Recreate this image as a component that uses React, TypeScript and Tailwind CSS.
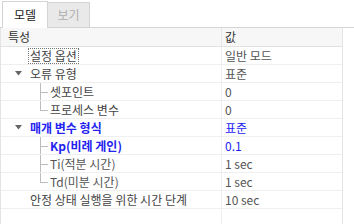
import React from 'react';

type Row = {
  label: string;
  value: string;
  level: 0 | 1;
  caret?: boolean;
  blue?: boolean;
  bold?: boolean;
  focus?: boolean;
  last?: boolean;
  muted?: boolean;
};

const rows: Row[] = [
  { label: '설정 옵션', value: '일반 모드', level: 0, focus: true },
  { label: '오류 유형', value: '표준', level: 0, caret: true },
  { label: '셋포인트', value: '0', level: 1 },
  { label: '프로세스 변수', value: '0', level: 1, last: true },
  { label: '매개 변수 형식', value: '표준', level: 0, caret: true, blue: true, bold: true },
  { label: 'Kp(비례 게인)', value: '0.1', level: 1, blue: true, bold: true },
  { label: 'Ti(적분 시간)', value: '1 sec', level: 1, muted: true },
  { label: 'Td(미분 시간)', value: '1 sec', level: 1, last: true, muted: true },
  { label: '안정 상태 실행을 위한 시간 단계', value: '10 sec', level: 0 },
];

const font = { fontFamily: '"Noto Sans CJK KR", "Noto Sans", sans-serif' };

export default function App() {
  return (
    <div className="w-[354px] h-[224px] bg-white overflow-hidden text-[12px] text-[#333]" style={font}>
      {/* Tabs */}
      <div className="flex items-end h-[28px] px-[2px] border-b border-[#d4d4d4]">
        <div className="h-[27px] w-[46px] flex items-center justify-center border border-b-0 border-[#d4d4d4] bg-white text-[#222] -mb-px">
          모델
        </div>
        <div className="h-[25px] w-[42px] flex items-center justify-center border border-l-0 border-b-0 border-[#d4d4d4] bg-[#e9e9e9] text-[#b0b0b0]">
          보기
        </div>
      </div>

      <div className="flex flex-col w-[343px] border-l border-r border-[#e4e4e4] h-[196px]">
        {/* Header */}
        <div className="flex h-[19px] bg-[#f7f7f7] border-b border-[#e2e2e2]">
          <div className="w-[221px] pl-[7px] flex items-center border-r border-[#e6e6e6] text-[#333]">특성</div>
          <div className="flex-1 pl-[3px] flex items-center text-[#333]">값</div>
        </div>

        {rows.map((r, i) => (
          <div key={i} className="flex h-[18px] border-b border-[#efefef]">
            <div className="w-[221px] relative flex items-center border-r border-[#eeeeee] whitespace-nowrap overflow-hidden">
              {r.level === 0 ? (
                <div className="flex items-center pl-[14px]">
                  <span className="w-[15px] flex justify-start">
                    {r.caret && (
                      <svg width="7" height="5" viewBox="0 0 7 5">
                        <path d="M0 0 L7 0 L3.5 4.5 Z" fill="#666" />
                      </svg>
                    )}
                  </span>
                  <span
                    className={
                      (r.focus ? 'border border-dotted border-[#777] px-[1px] -ml-[2px] leading-[14px] ' : 'leading-[16px] ') +
                      (r.blue ? 'text-[#2323f0] ' : 'text-[#444] ') +
                      (r.bold ? 'font-bold' : '')
                    }
                  >
                    {r.label}
                  </span>
                </div>
              ) : (
                <div className="flex items-center pl-[39px] h-full">
                  <span className="relative w-[10px] h-full">
                    <span className={'absolute left-0 top-[-1px] w-px bg-[#bdbdbd] ' + (r.last ? 'h-[10px]' : 'h-[19px]')} />
                    <span className="absolute left-0 top-[9px] w-[8px] h-px bg-[#bdbdbd]" />
                  </span>
                  <span
                    className={
                      (r.blue ? 'text-[#2323f0] ' : r.muted ? 'text-[#555] ' : 'text-[#444] ') + (r.bold ? 'font-bold' : '')
                    }
                  >
                    {r.label}
                  </span>
                </div>
              )}
            </div>
            <div className={'flex-1 pl-[3px] flex items-center ' + (r.blue ? 'text-[#2323f0]' : 'text-[#555]')}>
              {r.value}
            </div>
          </div>
        ))}
        <div className="flex flex-1">
          <div className="w-[221px] border-r border-[#eeeeee]" />
          <div className="flex-1" />
        </div>
      </div>
    </div>
  );
}
